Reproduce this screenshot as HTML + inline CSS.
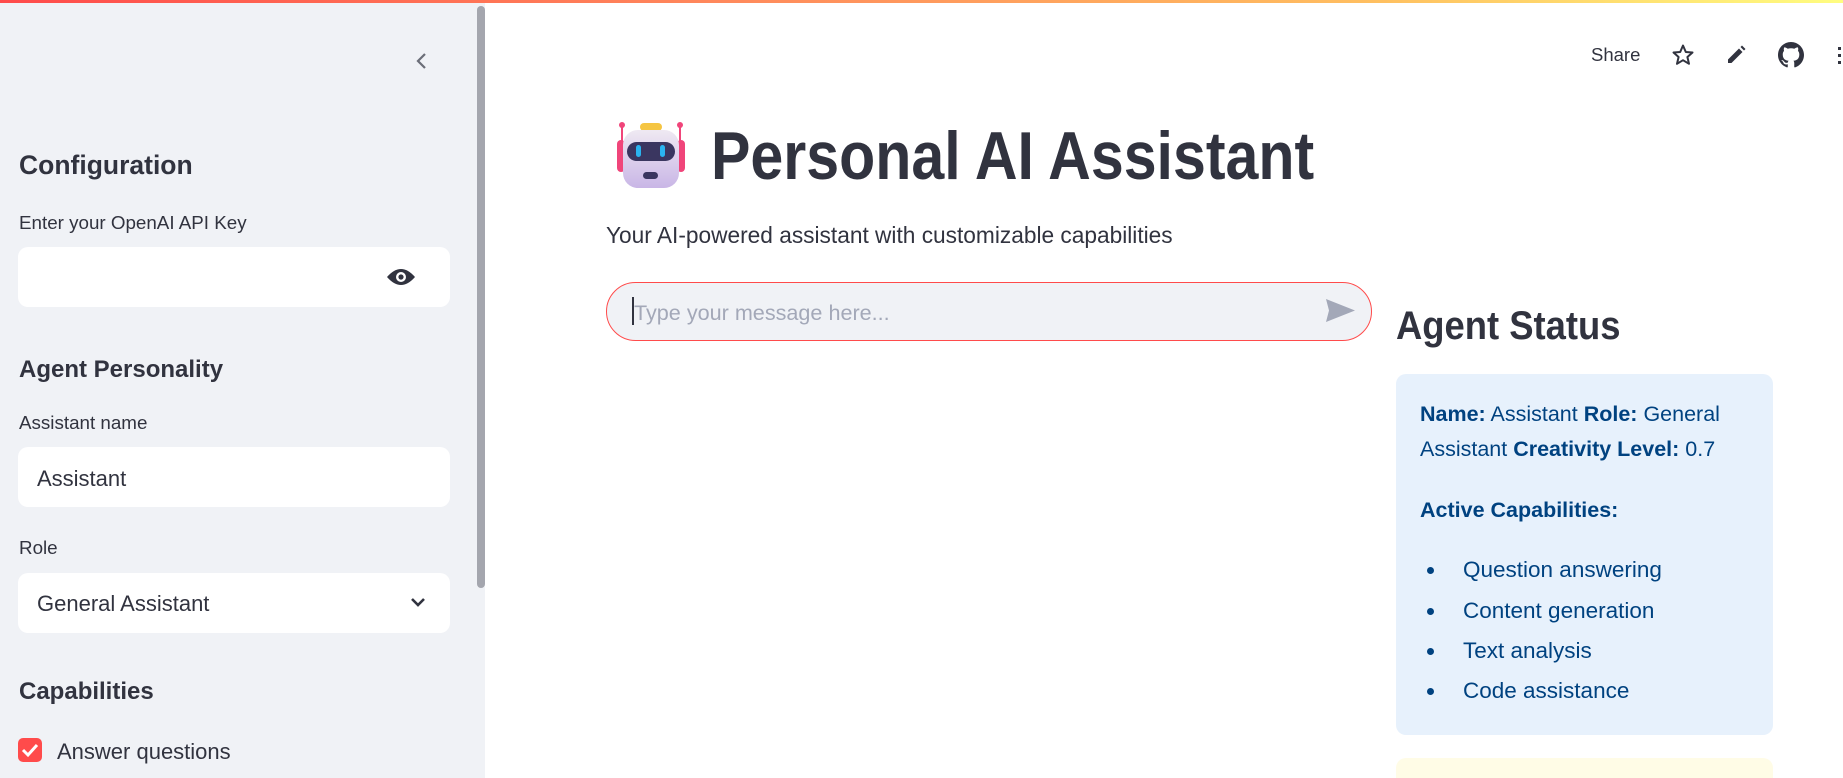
<!DOCTYPE html>
<html style="overflow:hidden;width:1843px;height:778px"><head><meta charset="utf-8"><style>
*{margin:0;padding:0;box-sizing:border-box}
body{width:1843px;height:778px;overflow:hidden;background:#fff;font-family:"Liberation Sans",sans-serif;color:#31333f;position:relative}
.a{position:absolute;white-space:nowrap;line-height:1}
#top{position:absolute;left:0;top:0;width:1843px;height:3px;background:linear-gradient(90deg,#ff4b4b,#ff8a5c 40%,#ffc060 75%,#fffd80)}
#side{position:absolute;left:0;top:3px;width:485px;height:775px;background:#f0f2f6}
.inp{position:absolute;left:18px;width:432px;height:60px;background:#fff;border-radius:10px}
.lbl{font-size:18.8px;color:#31333f}
.h{font-size:24px;font-weight:bold;color:#31333f}
.box{position:absolute;left:1396px;width:377px;border-radius:10px}
.bt{font-size:21.5px;color:#004280}
.li{font-size:22.5px}
.dot{position:absolute;left:1427px;width:7px;height:7px;border-radius:50%;background:#004280}
</style></head><body>
<div id="top"></div>
<div id="side"></div>
<div style="position:absolute;left:477px;top:6px;width:8px;height:582px;border-radius:4px;background:#a4a6ae"></div>
<svg class="a" style="left:414px;top:52px" width="16" height="18" viewBox="0 0 16 18"><path d="M11 2 L4 9 L11 16" fill="none" stroke="#6b6e78" stroke-width="2.2"/></svg>
<div class="a h" style="left:19px;top:152px;font-size:26.5px">Configuration</div>
<div class="a lbl" style="left:19px;top:214px">Enter your OpenAI API Key</div>
<div class="inp" style="top:247px"></div>
<svg class="a" style="left:386px;top:267px" width="30" height="20" viewBox="0 0 30 20"><path d="M1 10 Q15 -6 29 10 Q15 26 1 10Z" fill="#31333f"/><circle cx="15" cy="10" r="5" fill="#fff"/><circle cx="15" cy="10" r="2.6" fill="#31333f"/></svg>
<div class="a h" style="left:19px;top:358px">Agent Personality</div>
<div class="a lbl" style="left:19px;top:414px">Assistant name</div>
<div class="inp" style="top:447px"></div>
<div class="a" style="left:37px;top:468px;font-size:22px">Assistant</div>
<div class="a lbl" style="left:19px;top:539px">Role</div>
<div class="inp" style="top:573px"></div>
<div class="a" style="left:37px;top:593px;font-size:22px">General Assistant</div>
<svg class="a" style="left:410px;top:597px" width="16" height="12" viewBox="0 0 16 12"><path d="M2 2 L8 8 L14 2" fill="none" stroke="#31333f" stroke-width="2.6"/></svg>
<div class="a h" style="left:19px;top:680px">Capabilities</div>
<div style="position:absolute;left:18px;top:738px;width:24px;height:24px;border-radius:5px;background:#ff4b4b"></div>
<svg class="a" style="left:18px;top:738px" width="24" height="24" viewBox="0 0 24 24"><path d="M5 12 L10 17 L19 7" fill="none" stroke="#fff" stroke-width="3"/></svg>
<div class="a" style="left:57px;top:741px;font-size:22px">Answer questions</div>

<div class="a" style="left:1591px;top:46px;font-size:18.5px">Share</div>
<svg class="a" style="left:1671px;top:43px" width="24" height="24" viewBox="0 0 24 24"><path d="M12 2.5 L14.8 9 L21.5 9.5 L16.4 14 L18 20.8 L12 17.2 L6 20.8 L7.6 14 L2.5 9.5 L9.2 9Z" fill="none" stroke="#31333f" stroke-width="2" stroke-linejoin="round"/></svg>
<svg class="a" style="left:1725px;top:44px" width="22" height="22" viewBox="0 0 22 22"><path d="M3 19 L3 15.5 L14 4.5 L17.5 8 L6.5 19Z M15.5 3 L17 1.5 L20.5 5 L19 6.5Z" fill="#31333f"/></svg>
<svg class="a" style="left:1778px;top:42px" width="26" height="26" viewBox="0 0 16 16"><path fill="#31333f" d="M8 0C3.58 0 0 3.58 0 8c0 3.54 2.29 6.53 5.47 7.59.4.07.55-.17.55-.38 0-.19-.01-.82-.01-1.49-2.01.37-2.53-.49-2.69-.94-.09-.23-.48-.94-.82-1.13-.28-.15-.68-.52-.01-.53.63-.01 1.08.58 1.23.82.72 1.21 1.87.87 2.33.66.07-.52.28-.87.51-1.07-1.78-.2-3.64-.89-3.64-3.95 0-.87.31-1.59.82-2.15-.08-.2-.36-1.02.08-2.12 0 0 .67-.21 2.2.82.64-.18 1.32-.27 2-.27.68 0 1.36.09 2 .27 1.53-1.04 2.2-.82 2.2-.82.44 1.1.16 1.92.08 2.12.51.56.82 1.27.82 2.15 0 3.07-1.87 3.75-3.65 3.95.29.25.54.73.54 1.48 0 1.07-.01 1.93-.01 2.2 0 .21.15.46.55.38A8.013 8.013 0 0016 8c0-4.42-3.58-8-8-8z"/></svg>
<div style="position:absolute;left:1838px;top:47px;width:3px;height:17px;background:repeating-linear-gradient(#31333f 0 3px,transparent 3px 7px)"></div>

<svg class="a" style="left:613px;top:121px" width="72" height="68" viewBox="613 121 72 68">
<defs><linearGradient id="bd" x1="0" y1="0" x2="0" y2="1"><stop offset="0" stop-color="#efe9f2"/><stop offset="1" stop-color="#c9b6e6"/></linearGradient></defs>
<line x1="622" y1="125" x2="622" y2="150" stroke="#f0457a" stroke-width="2"/><line x1="680" y1="125" x2="680" y2="150" stroke="#f0457a" stroke-width="2"/>
<circle cx="622" cy="125" r="3" fill="#f0457a"/><circle cx="680" cy="125" r="3" fill="#f0457a"/>
<rect x="617" y="140" width="8" height="32" rx="4" fill="#f0457a"/><rect x="677" y="140" width="8" height="32" rx="4" fill="#f0457a"/>
<rect x="640" y="123" width="22" height="8" rx="4" fill="#f5c542"/>
<rect x="623" y="130" width="56" height="58" rx="15" fill="url(#bd)"/>
<rect x="627" y="142" width="48" height="19" rx="9.5" fill="#3a3660"/>
<rect x="636" y="145" width="5" height="12" rx="2.5" fill="#2ab4f0"/><rect x="660" y="145" width="5" height="12" rx="2.5" fill="#2ab4f0"/>
<rect x="643" y="172" width="15" height="7" rx="3.5" fill="#3a3660"/>
</svg>
<div class="a" style="left:711px;top:122px;font-size:68px;font-weight:bold;transform:scaleX(0.869);transform-origin:left;color:#31333f">Personal AI Assistant</div>
<div class="a" style="left:606px;top:224px;font-size:22.7px">Your AI-powered assistant with customizable capabilities</div>

<div style="position:absolute;left:606px;top:282px;width:766px;height:59px;border:1px solid #ff4b4b;border-radius:30px;background:#f0f2f6"></div>
<div style="position:absolute;left:632px;top:297px;width:2px;height:28px;background:#31333f"></div>
<div class="a" style="left:634px;top:302px;font-size:21.6px;color:#a3a8b8">Type your message here...</div>
<svg class="a" style="left:1325px;top:298px" width="31" height="25" viewBox="0 0 31 25"><path d="M1 1 L30 12.5 L1 24 L4 12.5Z" fill="#a3a8b8"/></svg>

<div class="a" style="left:1396px;top:306px;font-size:40px;font-weight:bold;transform:scaleX(0.91);transform-origin:left;color:#31333f">Agent Status</div>
<div class="box" style="top:374px;height:361px;background:#e7f1fc"></div>
<div class="a bt" style="left:1420px;top:404px"><b>Name:</b> Assistant <b>Role:</b> General</div>
<div class="a bt" style="left:1420px;top:439px">Assistant <b>Creativity Level:</b> 0.7</div>
<div class="a bt" style="left:1420px;top:500px"><b>Active Capabilities:</b></div>
<div class="dot" style="top:567px"></div><div class="a bt li" style="left:1463px;top:559px">Question answering</div>
<div class="dot" style="top:608px"></div><div class="a bt li" style="left:1463px;top:600px">Content generation</div>
<div class="dot" style="top:648px"></div><div class="a bt li" style="left:1463px;top:640px">Text analysis</div>
<div class="dot" style="top:688px"></div><div class="a bt li" style="left:1463px;top:680px">Code assistance</div>
<div class="box" style="top:758px;height:20px;border-radius:10px 10px 0 0;background:#fffce6"></div>
</body></html>
